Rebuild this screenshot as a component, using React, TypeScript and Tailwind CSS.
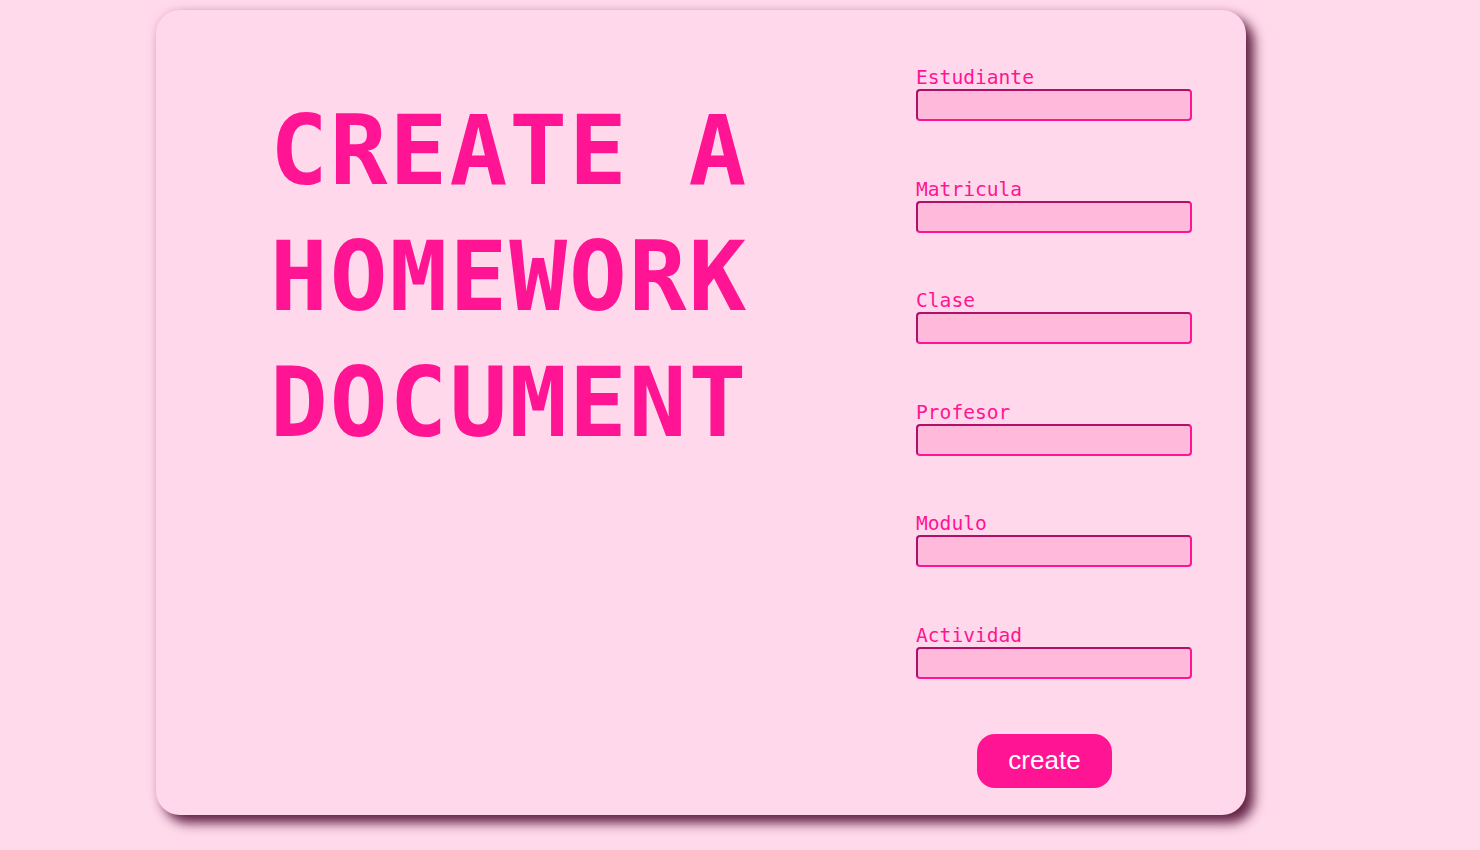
import React from 'react';

const fields = ['Estudiante', 'Matricula', 'Clase', 'Profesor', 'Modulo', 'Actividad'];

export default function App() {
  return (
    <div className="min-h-[850px] w-full bg-[#ffdaeb] pt-[10px]">
      <div className="ml-[156px] flex h-[805px] w-[1090px] rounded-[24px] bg-[#ffd9eb] shadow-[8px_8px_12px_rgba(90,25,60,0.95),0_0_8px_rgba(200,120,160,0.35)]">
        <div className="w-[760px] pl-[114px] pt-[78px]">
          <h1 className="font-['DejaVu_Sans_Mono',monospace] text-[96px] font-bold leading-[126px] tracking-[2px] text-[#ff1493]">
            CREATE A<br />HOMEWORK<br />DOCUMENT
          </h1>
        </div>
        <div className="flex flex-col pt-[58px]">
          <div className="flex flex-col gap-[58.6px]">
            {fields.map((f) => (
              <div key={f} className="flex flex-col">
                <label className="mb-[1px] font-['DejaVu_Sans_Mono',monospace] text-[19.6px] leading-[20px] text-[#ff1493]">
                  {f}
                </label>
                <input
                  type="text"
                  className="h-[32px] w-[276px] rounded-[4px] border-2 border-t-[#b0106a] border-l-[#b0106a] border-r-[#ff1493] border-b-[#ff1493] bg-[#ffb9db] outline-none"
                />
              </div>
            ))}
          </div>
          <button className="ml-[61px] mt-[55px] h-[54px] w-[135px] rounded-[18px] bg-[#ff1493] font-['Liberation_Sans',Arial,sans-serif] text-[26px] text-white">
            create
          </button>
        </div>
      </div>
    </div>
  );
}
